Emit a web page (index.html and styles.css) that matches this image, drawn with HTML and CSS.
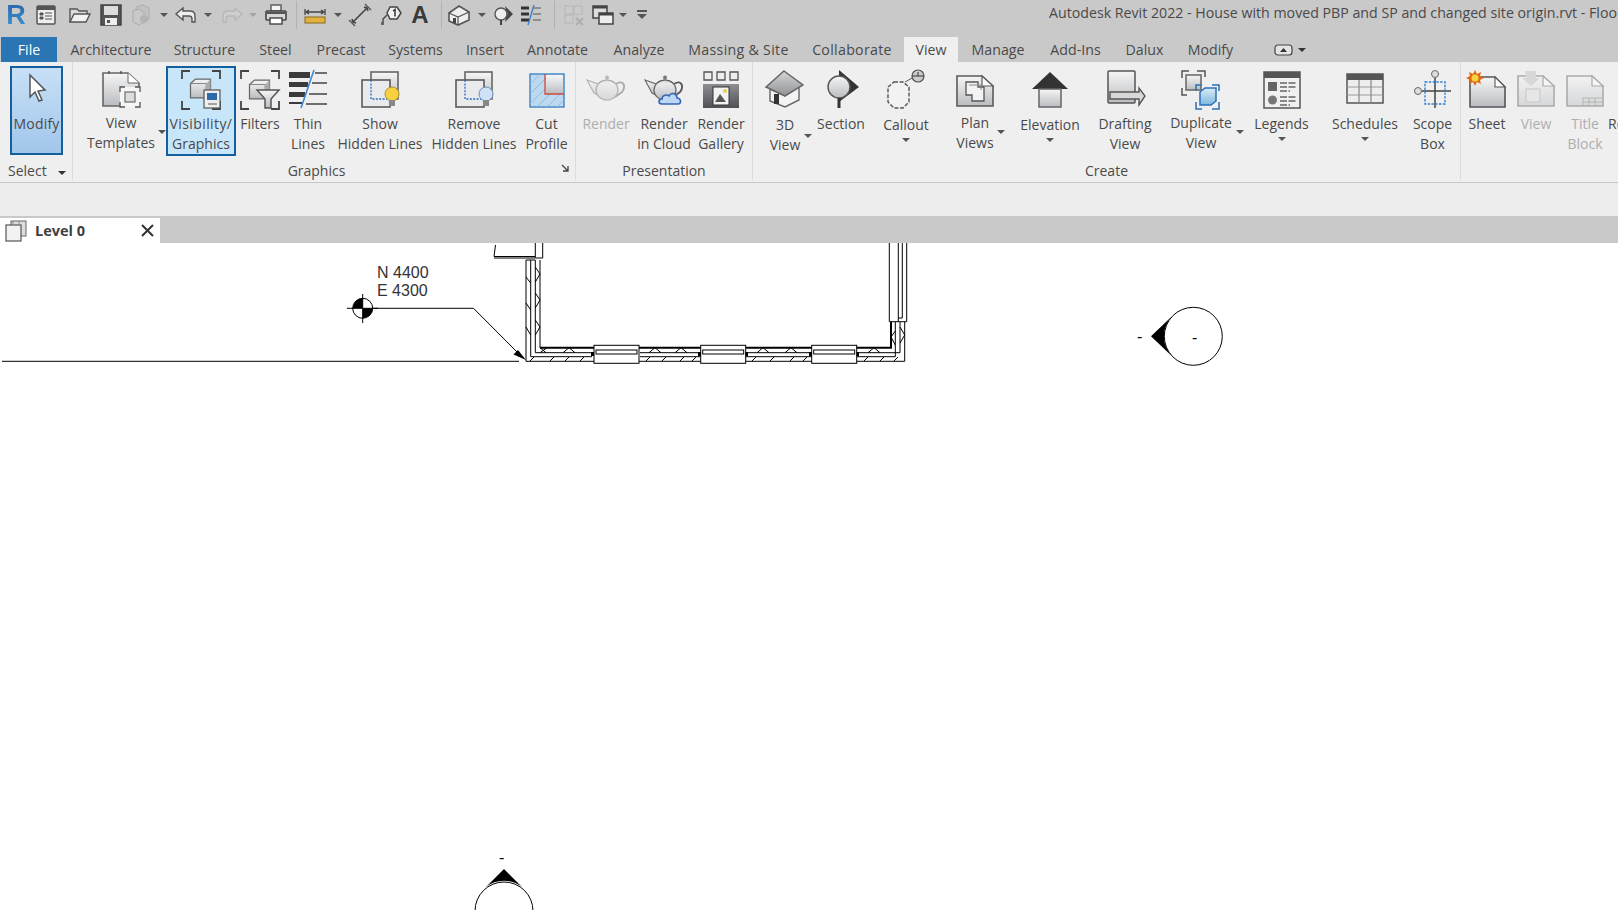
FILE: index.html
```html
<!DOCTYPE html>
<html lang="en">
<head>
    <meta charset="UTF-8">
    <title>Autodesk Revit 2022</title>
    <link rel="stylesheet" href="styles.css">
</head>
<body>
    <!-- shared gradients and shapes for the icons -->
    <svg class="defs">
        <defs>
            <linearGradient id="g" x1="0" y1="0" x2="0" y2="1"><stop offset="0" stop-color="#f6f6f6"/><stop offset="1" stop-color="#b9bcc0"/></linearGradient>
            <linearGradient id="gd" x1="0" y1="0" x2="0" y2="1"><stop offset="0" stop-color="#8d8f93"/><stop offset="1" stop-color="#4f5155"/></linearGradient>
            <linearGradient id="gr" x1="0" y1="0" x2="0" y2="1"><stop offset="0" stop-color="#d6d6d6"/><stop offset="1" stop-color="#8f9195"/></linearGradient>
            <linearGradient id="gb" x1="0" y1="0" x2="0" y2="1"><stop offset="0" stop-color="#d8ecf8"/><stop offset="1" stop-color="#7db8dc"/></linearGradient>
            <symbol id="sheet" viewBox="0 0 40 40"><path d="M2 6H27L38 16V36H2Z" fill="url(#g)" stroke="#5a5a5a" stroke-width="1.6"/><path d="M27 6V16H38Z" fill="#fff" stroke="#5a5a5a" stroke-width="1.2"/></symbol>
            <symbol id="corners" viewBox="0 0 40 40"><path d="M1 9V1H9M31 1H39V9M1 31V39H9M31 39H39V31" fill="none" stroke="#444" stroke-width="1.8"/></symbol>
            <symbol id="cube" viewBox="0 0 40 40"><path d="M4 12L12 5H36V28L29 35H4Z" fill="url(#g)" stroke="#666" stroke-width="2"/><path d="M4 12H29V35" fill="none" stroke="#888" stroke-width="1.6"/><path d="M29 12L36 5V28L29 35Z" fill="#a9abae"/></symbol>
            <symbol id="hidden" viewBox="0 0 40 40"><rect x="11" y="2" width="27" height="27" fill="url(#g)" stroke="#666" stroke-width="1.6"/><rect x="2" y="10" width="28" height="27" fill="#e9eaec" stroke="#5a5a5a" stroke-width="1.6"/><path d="M11 10V29H27" fill="none" stroke="#2b6cc4" stroke-width="1.3" stroke-dasharray="2 1.4"/></symbol>
            <symbol id="teapot" viewBox="0 0 40 40"><path d="M30 14C38 9 40 17 36 22L29 27" fill="none" stroke="#555" stroke-width="1.8"/><path d="M1 10L12 14V25L8 23Z" fill="url(#g)" stroke="#666" stroke-width="1.1"/><ellipse cx="21" cy="20" rx="11" ry="10" fill="url(#g)" stroke="#666" stroke-width="1.2"/><path d="M13 13Q21 7 29 13" fill="#ddd" stroke="#555" stroke-width="1.2"/><circle cx="21" cy="7.5" r="2" fill="#777"/></symbol>
        </defs>
    </svg>

    <div class="topbar">
        <div class="qat">
            <div class="qat-item"><span class="logo">R</span></div>
            <div class="qat-item"><svg width="24" height="24" viewBox="0 0 24 24"><rect x="3" y="3" width="18" height="18" rx="1" fill="#eee" stroke="#555" stroke-width="1.5"/><rect x="3" y="3" width="18" height="4" fill="#555"/><path d="M6 10h3v2H6zM6 14h3v2H6zM11 10h7M11 13h7M11 16h7" fill="#555" stroke="#555"/></svg></div>
            <div class="qat-item"><svg width="24" height="24" viewBox="0 0 24 24"><path d="M2 19V6H9L11 8H19V11" fill="#ddd" stroke="#555" stroke-width="1.4"/><path d="M2 19L6 11H22L18 19Z" fill="#f2f2f2" stroke="#555" stroke-width="1.4"/></svg></div>
            <div class="qat-item"><svg width="24" height="24" viewBox="0 0 24 24"><path d="M2 2H22V22H2Z" fill="#555" stroke="#444" stroke-width="1.5"/><rect x="5" y="3" width="14" height="9" fill="#ddd"/><rect x="6" y="15" width="12" height="7" fill="#eee"/><rect x="8" y="17" width="3" height="3" fill="#555"/></svg></div>
            <div class="qat-item"><svg class="off" width="24" height="24" viewBox="0 0 24 24"><path d="M7 4L14 2L20 5V16L14 20L7 17Z" fill="#bbb" stroke="#8a8a8a"/><path d="M4 8L10 6L15 9V19L10 22L4 19Z" fill="#c8c8c8" stroke="#8a8a8a"/><circle cx="15" cy="16" r="4" fill="#999"/></svg></div>
            <div class="qat-item"><i class="caret"></i></div>
            <div class="qat-item"><svg width="24" height="24" viewBox="0 0 24 24"><path d="M9 5L2 11L9 17V13H15C17 13 18 14 18 16V19H21V13C21 9 19 8 16 8H9Z" fill="#eee" stroke="#555" stroke-width="1.4"/></svg></div>
            <div class="qat-item"><i class="caret"></i></div>
            <div class="qat-item"><svg class="off" width="24" height="24" viewBox="0 0 24 24"><path d="M15 5L22 11L15 17V13H9C7 13 6 14 6 16V19H3V13C3 9 5 8 8 8H15Z" fill="#d5d5d5" stroke="#a2a2a2" stroke-width="1.4"/></svg></div>
            <div class="qat-item"><i class="caret caret-off"></i></div>
            <div class="qat-item"><svg width="24" height="24" viewBox="0 0 24 24"><rect x="7" y="2" width="10" height="6" fill="#f4f4f4" stroke="#555" stroke-width="1.4"/><rect x="2" y="8" width="20" height="9" rx="1" fill="#d8d8d8" stroke="#444" stroke-width="1.6"/><rect x="6" y="15" width="12" height="6" fill="#fff" stroke="#444" stroke-width="1.4"/><rect x="2.5" y="9" width="19" height="2" fill="#555"/></svg></div>
            <div class="qat-sep"></div>
            <div class="qat-item"><svg width="24" height="24" viewBox="0 0 24 24"><path d="M2 6V12M22 6V12M3 9H21M3 9L6 7M3 9L6 11M21 9L18 7M21 9L18 11" stroke="#444" stroke-width="1.3" fill="none"/><rect x="2" y="14" width="20" height="6" fill="#e3b23c" stroke="#8a6a1c"/></svg></div>
            <div class="qat-item"><i class="caret"></i></div>
            <div class="qat-item"><svg width="24" height="24" viewBox="0 0 24 24"><path d="M5 19L19 5M8 20L5 19L4 16M16 4L19 5L20 8" stroke="#444" stroke-width="1.6" fill="none"/><path d="M1 17L7 23M17 1L23 7" stroke="#555" stroke-width="1.4"/></svg></div>
            <div class="qat-item"><svg width="24" height="24" viewBox="0 0 24 24"><path d="M11 4H18L22 10L18 16H11L8 10Z" fill="#f2f2f2" stroke="#444" stroke-width="1.5"/><path d="M8 12L4 16V20" stroke="#444" stroke-width="1.4" fill="none"/><rect x="2" y="19" width="3" height="3" fill="#666"/><path d="M14 8L16 6.5V13.5" stroke="#333" stroke-width="1.5" fill="none"/></svg></div>
            <div class="qat-item"><span class="qat-a">A</span></div>
            <div class="qat-sep"></div>
            <div class="qat-item"><svg width="24" height="24" viewBox="0 0 24 24"><path d="M2 10L12 3L22 9V17L11 22L2 18Z" fill="#eee" stroke="#555" stroke-width="1.6"/><path d="M2 10L11 14L22 9M11 14V22" stroke="#555" stroke-width="1.2" fill="none"/><rect x="6" y="15" width="3" height="5" fill="#444"/></svg></div>
            <div class="qat-item"><i class="caret"></i></div>
            <div class="qat-item"><svg width="24" height="24" viewBox="0 0 24 24"><circle cx="10" cy="11" r="6" fill="#eee" stroke="#555" stroke-width="1.4"/><path d="M14 3L22 11L14 19L15 15A6 6 0 0 0 15 7Z" fill="#444"/><path d="M10 17V22" stroke="#444" stroke-width="2"/></svg></div>
            <div class="qat-item"><svg width="24" height="24" viewBox="0 0 24 24"><path d="M2 5H10M2 11H10M2 17H10" stroke="#333" stroke-width="3"/><path d="M14 5H22M14 11H22M14 17H22" stroke="#555" stroke-width="1.2"/><path d="M9 22L15 2" stroke="#3b82c9" stroke-width="1.4"/></svg></div>
            <div class="qat-sep"></div>
            <div class="qat-item"><svg class="off" width="24" height="24" viewBox="0 0 24 24"><rect x="3" y="3" width="8" height="8" fill="#ccc" stroke="#a0a0a0"/><rect x="12" y="3" width="8" height="8" fill="#ccc" stroke="#a0a0a0"/><rect x="3" y="12" width="8" height="8" fill="#ccc" stroke="#a0a0a0"/><path d="M14 15L21 22M21 15L14 22" stroke="#8f8f8f" stroke-width="2"/></svg></div>
            <div class="qat-item"><svg width="24" height="24" viewBox="0 0 24 24"><rect x="2" y="3" width="14" height="12" fill="#ddd" stroke="#444" stroke-width="1.5"/><rect x="8" y="10" width="14" height="11" fill="#eee" stroke="#444" stroke-width="1.5"/><rect x="2" y="3" width="14" height="2.5" fill="#444"/><rect x="8" y="10" width="14" height="2.5" fill="#444"/></svg></div>
            <div class="qat-item"><i class="caret"></i></div>
            <div class="qat-item"><svg width="14" height="12" viewBox="0 0 14 12"><path d="M2 2H12" stroke="#555" stroke-width="2"/><path d="M2 5H12L7 10Z" fill="#555"/></svg></div>
        </div>
        <div class="title">Autodesk Revit 2022 - House with moved PBP and SP and changed site origin.rvt - Floor Plan: Level 0</div>
    </div>

    <div class="tabs">
        <div class="tab tab-file">File</div>
        <div class="tab">Architecture</div>
        <div class="tab">Structure</div>
        <div class="tab">Steel</div>
        <div class="tab">Precast</div>
        <div class="tab">Systems</div>
        <div class="tab">Insert</div>
        <div class="tab">Annotate</div>
        <div class="tab">Analyze</div>
        <div class="tab tab-wide">Massing &amp; Site</div>
        <div class="tab tab-wide">Collaborate</div>
        <div class="tab tab-active">View</div>
        <div class="tab">Manage</div>
        <div class="tab">Add-Ins</div>
        <div class="tab">Dalux</div>
        <div class="tab">Modify</div>
        <div class="tab-toggle">
            <svg width="20" height="12" viewBox="0 0 20 12"><rect x="1" y="1" width="17" height="10" rx="3" fill="#e4e4e4" stroke="#444" stroke-width="1.2"/><path d="M6 8L9.5 4L13 8Z" fill="#333"/></svg>
            <i class="caret caret-dark"></i>
        </div>
    </div>

    <div class="ribbon">
        <section class="panel panel-select">
            <div class="tools">
                <div class="tool tool-on-modify">
                    <svg class="icon" width="40" height="40" viewBox="0 0 40 40"><path d="M13 5V27L18 22L22 31L25 30L21 21L28 20Z" fill="#fff" stroke="#555" stroke-width="1.5"/></svg>
                    <div class="lbl lbl-modify">Modify</div>
                </div>
            </div>
            <div class="panel-title title-select">Select <i class="caret caret-dark"></i></div>
        </section>

        <section class="panel panel-graphics">
            <div class="tools">
                <div class="tool">
                    <svg class="icon" width="40" height="40" viewBox="0 0 40 40"><path d="M2 3H27L38 13V36H2Z" fill="url(#g)" stroke="#666" stroke-width="1.6"/><path d="M27 3V13H38" fill="#fff" stroke="#666"/><path d="M8 1V4M20 1V4" stroke="#555" stroke-width="1.5"/><rect x="19" y="17" width="20" height="20" fill="#f5f5f5"/><path d="M19 22V17H24M34 17H39V22M19 32V37H24M34 37H39V32" fill="none" stroke="#555" stroke-width="1.3"/><rect x="24" y="22" width="10" height="10" fill="#ddd" stroke="#777" stroke-width="1.3"/></svg>
                    <div class="lbl lbl-up">View<br>Templates</div>
                    <i class="caret caret-side caret-templates"></i>
                </div>
                <div class="tool tool-on">
                    <svg class="icon" width="40" height="40" viewBox="0 0 40 40"><use href="#corners"/><use href="#cube" x="7" y="6" width="25" height="25"/><rect x="23" y="20" width="16" height="18" fill="#eee" stroke="#555" stroke-width="1.2"/><rect x="26" y="23" width="10" height="7" fill="#2e6aa8"/><path d="M27 34H36" stroke="#555"/></svg>
                    <div class="lbl"><span class="lbl-wide">Visibility/</span><br>Graphics</div>
                </div>
                <div class="tool">
                    <svg class="icon" width="40" height="40" viewBox="0 0 40 40"><use href="#corners"/><use href="#cube" x="7" y="7" width="25" height="25"/><path d="M17 20H39L31 29V38H25V29Z" fill="url(#g)" stroke="#555" stroke-width="1.5"/></svg>
                    <div class="lbl">Filters</div>
                </div>
                <div class="tool">
                    <svg class="icon" width="40" height="40" viewBox="0 0 40 40"><path d="M1 2H22V8H1ZM1 12H20V17H1ZM1 22H17V27H1ZM1 32H14V34H1Z" fill="#3a3a3a"/><path d="M27 3H39M24 13H39M21 24H39M18 34H39" stroke="#444" stroke-width="1.3"/><path d="M13 38L26 0" stroke="#3f88d2" stroke-width="1.6"/></svg>
                    <div class="lbl">Thin<br>Lines</div>
                </div>
                <div class="tool">
                    <svg class="icon" width="40" height="40" viewBox="0 0 40 40"><use href="#hidden"/><circle cx="32" cy="24" r="7" fill="#f7d23e" stroke="#a9902f"/><rect x="29" y="30" width="6" height="6" fill="#888"/></svg>
                    <div class="lbl">Show<br>Hidden Lines</div>
                </div>
                <div class="tool">
                    <svg class="icon" width="40" height="40" viewBox="0 0 40 40"><use href="#hidden"/><circle cx="32" cy="24" r="7" fill="#cfe2f7" stroke="#6d8fb4"/><rect x="29" y="30" width="6" height="6" fill="#888"/></svg>
                    <div class="lbl">Remove<br>Hidden Lines</div>
                </div>
                <div class="tool">
                    <svg class="icon" width="40" height="40" viewBox="0 0 40 40"><rect x="3" y="4" width="34" height="33" fill="#bcd8ef" stroke="#4a8bc6" stroke-width="1.5"/><path d="M3 14L13 4M3 24L23 4M3 34L33 4M10 37L37 10M20 37L37 20M30 37L37 30" stroke="#86b6de" stroke-width="0.8"/><path d="M19 5H36V24H19Z" fill="url(#g)"/><path d="M18 4V24H37" fill="none" stroke="#d0493c" stroke-width="1.3"/></svg>
                    <div class="lbl">Cut<br>Profile</div>
                </div>
            </div>
            <div class="panel-title title-graphics">Graphics</div>
            <svg class="expander" width="9" height="9" viewBox="0 0 9 9"><path d="M1 1L7 7M7 2V7H2" fill="none" stroke="#444" stroke-width="1.3"/></svg>
        </section>

        <section class="panel panel-presentation">
            <div class="tools">
                <div class="tool tool-off">
                    <svg class="icon off" width="40" height="40" viewBox="0 0 40 40"><use href="#teapot"/></svg>
                    <div class="lbl">Render</div>
                </div>
                <div class="tool">
                    <svg class="icon" width="40" height="40" viewBox="0 0 40 40"><use href="#teapot"/><path d="M18 34C14 34 14 29 18 29C18 25 23 24 25 26C27 22 33 23 33 28C37 28 38 34 34 34Z" fill="#bcd7f3" stroke="#3765b8" stroke-width="1.6"/></svg>
                    <div class="lbl">Render<br>in Cloud</div>
                </div>
                <div class="tool">
                    <svg class="icon" width="40" height="40" viewBox="0 0 40 40"><path d="M3 2H11V10H3ZM16 2H24V10H16ZM29 2H37V10H29Z" fill="#eee" stroke="#555" stroke-width="1.3"/><rect x="2" y="14" width="36" height="24" fill="url(#gd)"/><rect x="12" y="17" width="16" height="18" fill="#f3f3f3" stroke="#333"/><path d="M14 32L19 24L25 32Z" fill="#555"/><circle cx="24" cy="21" r="2" fill="#e9d14b"/></svg>
                    <div class="lbl">Render<br>Gallery</div>
                </div>
            </div>
            <div class="panel-title title-presentation">Presentation</div>
        </section>

        <section class="panel panel-create">
            <div class="tools">
                <div class="tool">
                    <svg class="icon" width="40" height="40" viewBox="0 0 40 40"><path d="M5 19V31L20 37L34 30V17L20 26Z" fill="#f3f3f3" stroke="#666" stroke-width="1.4"/><path d="M19 1L38 15L20 26L1 17Z" fill="url(#gr)" stroke="#666" stroke-width="1.5"/><rect x="9" y="24" width="5" height="10" fill="#333"/></svg>
                    <div class="lbl lbl-down">3D<br>View</div>
                    <i class="caret caret-side caret-3d"></i>
                </div>
                <div class="tool">
                    <svg class="icon" width="40" height="40" viewBox="0 0 40 40"><path d="M18 0L38 17L18 32Z" fill="#333"/><circle cx="18" cy="17" r="11" fill="url(#g)" stroke="#555" stroke-width="1.4"/><path d="M18 28V38" stroke="#333" stroke-width="3"/></svg>
                    <div class="lbl">Section</div>
                </div>
                <div class="tool">
                    <svg class="icon" width="40" height="40" viewBox="0 0 40 40"><path d="M8 12H17L23 17V32L17 38H8L2 32V17Z" fill="#f2f2f2" stroke="#555" stroke-width="1.4" stroke-dasharray="4 1.6"/><path d="M19 12L28 7" stroke="#555"/><circle cx="32" cy="6" r="6" fill="#ccc" stroke="#555" stroke-width="1.2"/><path d="M26 6H38M32 2V6" stroke="#333"/></svg>
                    <div class="lbl lbl-down">Callout</div>
                    <i class="caret caret-under"></i>
                </div>
                <div class="tool">
                    <svg class="icon" width="40" height="40" viewBox="0 0 40 40"><use href="#sheet"/><path d="M11 12H23V17H29V31H17V25H11Z" fill="#f3f3f3" stroke="#555" stroke-width="1.3"/><path d="M14 15H26V20" fill="none" stroke="#888"/></svg>
                    <div class="lbl lbl-up">Plan<br>Views</div>
                    <i class="caret caret-side caret-plan"></i>
                </div>
                <div class="tool">
                    <svg class="icon" width="40" height="40" viewBox="0 0 40 40"><path d="M20 2L38 19H2Z" fill="#333"/><rect x="9" y="19" width="22" height="18" fill="url(#g)" stroke="#666" stroke-width="1.5"/></svg>
                    <div class="lbl lbl-down">Elevation</div>
                    <i class="caret caret-under"></i>
                </div>
                <div class="tool">
                    <svg class="icon" width="40" height="40" viewBox="0 0 40 40"><rect x="3" y="1" width="27" height="32" rx="1" fill="url(#g)" stroke="#555" stroke-width="1.5"/><path d="M5 22H34V18L40 26L34 35V29H5Z" fill="#d8d8d8" stroke="#555" stroke-width="1.4"/></svg>
                    <div class="lbl">Drafting<br>View</div>
                </div>
                <div class="tool">
                    <svg class="icon" width="40" height="40" viewBox="0 0 40 40"><path d="M1 8V1H8M16 1H24V7M1 18V25H6" fill="none" stroke="#555" stroke-width="1.5"/><rect x="5" y="5" width="15" height="15" fill="url(#g)" stroke="#666" stroke-width="1.5"/><path d="M15 21V15H21M31 15H38V21M15 32V39H21M31 39H38V32" fill="none" stroke="#2c70b8" stroke-width="1.5"/><path d="M19 22L24 18H35V31L30 35H19Z" fill="url(#gb)" stroke="#2c70b8" stroke-width="1.5"/></svg>
                    <div class="lbl lbl-up">Duplicate<br>View</div>
                    <i class="caret caret-side caret-dup"></i>
                </div>
                <div class="tool">
                    <svg class="icon" width="40" height="40" viewBox="0 0 40 40"><rect x="2" y="2" width="36" height="36" fill="#f0f0f0" stroke="#555" stroke-width="1.5"/><rect x="2" y="2" width="36" height="6" fill="#555"/><rect x="6" y="12" width="9" height="9" fill="#666"/><circle cx="10.5" cy="30" r="4.5" fill="#777"/><path d="M18 13H34M18 17H34M18 21H28M18 27H34M18 31H34M18 35H28" stroke="#666" stroke-width="1.3" stroke-dasharray="7 1.5"/></svg>
                    <div class="lbl">Legends</div>
                    <i class="caret caret-under caret-under-up"></i>
                </div>
                <div class="tool">
                    <svg class="icon" width="40" height="40" viewBox="0 0 40 40"><rect x="2" y="4" width="36" height="29" fill="#eee" stroke="#555" stroke-width="1.5"/><rect x="2" y="4" width="36" height="6" fill="#555"/><path d="M2 17H38M2 25H38" stroke="#999" stroke-width="1.2"/><path d="M14 10V33M26 10V33" stroke="#888" stroke-width="1.2"/></svg>
                    <div class="lbl">Schedules</div>
                    <i class="caret caret-under caret-under-up"></i>
                </div>
                <div class="tool">
                    <svg class="icon" width="40" height="40" viewBox="0 0 40 40"><circle cx="22" cy="4" r="3.5" fill="#ddd" stroke="#666"/><circle cx="5" cy="21" r="3.5" fill="#ddd" stroke="#666"/><path d="M22 8V38M9 21H38" stroke="#444" stroke-width="1.5"/><rect x="12" y="12" width="20" height="22" fill="none" stroke="#2f7fd0" stroke-width="1.4" stroke-dasharray="2.4 1.4"/></svg>
                    <div class="lbl">Scope<br>Box</div>
                </div>
            </div>
            <div class="panel-title title-create">Create</div>
        </section>

        <section class="panel panel-sheet">
            <div class="tools">
                <div class="tool">
                    <svg class="icon" width="40" height="40" viewBox="0 0 40 40"><path d="M3 7H28L38 17V37H3Z" fill="url(#g)" stroke="#555" stroke-width="1.6"/><path d="M28 7V17H38Z" fill="#fff" stroke="#555" stroke-width="1.1"/><path d="M8 0L10 4L14 2L13 6L17 8L13 10L14 14L10 12L8 16L6 12L2 14L3 10L-1 8L3 6L2 2L6 4Z" fill="#e06a12"/><circle cx="8" cy="8" r="3.5" fill="#f6d345"/></svg>
                    <div class="lbl">Sheet</div>
                </div>
                <div class="tool tool-off">
                    <svg class="icon off" width="40" height="40" viewBox="0 0 40 40"><use href="#sheet"/><path d="M9 1H20V8H24L15 16L6 8H10Z" fill="#bbb"/><rect x="10" y="19" width="14" height="13" fill="#ddd" stroke="#999"/></svg>
                    <div class="lbl">View</div>
                </div>
                <div class="tool tool-off">
                    <svg class="icon off" width="40" height="40" viewBox="0 0 40 40"><use href="#sheet"/><path d="M18 36V28H38M24 28V36M30 28V36M18 32H38" fill="none" stroke="#777" stroke-width="1.2"/></svg>
                    <div class="lbl">Title<br>Block</div>
                </div>
                <div class="tool tool-clipped">
                    <div class="icon-space"></div>
                    <div class="lbl">Revision</div>
                </div>
            </div>
        </section>
    </div>

    <div class="options-bar"></div>

    <div class="doc-tabs">
        <div class="doc-tab">
            <svg width="22" height="22" viewBox="0 0 22 22"><rect x="6" y="1" width="15" height="15" fill="#ddd" stroke="#666"/><rect x="1" y="5" width="15" height="16" fill="#f2f2f2" stroke="#555" stroke-width="1.2"/><path d="M8 1V5M14 1V5" stroke="#888"/></svg>
            <span class="doc-name">Level 0</span>
            <svg class="doc-close" width="15" height="15" viewBox="0 0 15 15"><path d="M2 2L13 13M13 2L2 13" stroke="#333" stroke-width="2"/></svg>
        </div>
    </div>

    <svg class="canvas" width="1618" height="667" viewBox="0 243 1618 667">
        <g class="thin">
            <!-- survey point and its leader -->
            <circle cx="362.7" cy="308.3" r="10"/>
            <path class="solid" d="M362.7 308.3V298.3A10 10 0 0 0 352.7 308.3ZM362.7 308.3V318.3A10 10 0 0 0 372.7 308.3Z"/>
            <path d="M347 308.3H378M362.7 294V323M372 308.3H473.5L523 358"/>
            <path class="solid" d="M526 360L518 350L513.5 354.5Z"/>
            <path d="M2 361.3H519"/>

            <!-- bit of wall and door at the top -->
            <path d="M535.3 243V258H542.7V243M495.5 245L494 256.5H535M494 258H535"/>

            <!-- left wall -->
            <path d="M535.3 260H526V361.3H904.7V322M530.7 260V356.7H592M535.3 260V352.7H592M540 260V347.7"/>
            <path d="M526 277L530.7 283M526 303L530.7 310M526 327L530.7 335M535.3 267L540 274L535.3 282M535.3 293L540 300L535.3 308M535.3 320L540 327L535.3 335"/>

            <!-- right wall with window strip -->
            <path d="M889.3 243V321.7H906.7V243M898.3 243V321.7M902.3 243V318H898.3M895.3 322V356.7H640M900 322V352.7H640"/>
            <path d="M900 327L904.7 335L900 343M891 337L895.3 331M891 337L895.3 345"/>

            <!-- wall hatch -->
            <path d="M540 352.7L547 347.7M540 347.7L546 352.7M563 352.7L569 347.7L575 352.7M649 352.7L655 347.7L661 352.7M675 352.7L681 347.7L687 352.7M757 352.7L763 347.7L769 352.7M785 352.7L791 347.7L797 352.7M868 352.7L874 347.7L880 352.7"/>
            <path d="M530 361L534 357M550 361L554 357M565 361L569 357M580 361L584 357M646 361L650 357M662 361L666 357M680 361L684 357M692 361L696 357M752 361L756 357M770 361L774 357M790 361L794 357M803 361L807 357M864 361L868 357M880 361L884 357M894 361L898 357"/>
        </g>
        <path class="thick" d="M540 347.7H891V322"/>

        <!-- windows in the bottom wall -->
        <g class="thin window">
            <rect x="594" y="345.3" width="45" height="18"/>
            <rect x="596" y="350" width="41" height="4"/>
            <rect x="700.7" y="345.3" width="45" height="18"/>
            <rect x="702.7" y="350" width="41" height="4"/>
            <rect x="811.7" y="345.3" width="45" height="18"/>
            <rect x="813.7" y="350" width="41" height="4"/>
        </g>
        <path class="solid" d="M591 352H594V356H591ZM698 352H701V356H698ZM745.7 352H748V356H745.7ZM809 352H812V356H809ZM856.7 352H859V356H856.7Z"/>

        <text class="spot" x="377" y="278">N 4400</text>
        <text class="spot" x="377" y="296">E 4300</text>

        <!-- section mark on the right -->
        <circle class="thin" cx="1193.3" cy="336.3" r="29"/>
        <path class="solid" d="M1151 336.3L1171.7 316.5A29 29 0 0 0 1171.7 356Z"/>
        <text class="dash" x="1137" y="342">-</text>
        <text class="dash" x="1192" y="343">-</text>

        <!-- elevation mark at the bottom -->
        <circle class="thin" cx="504" cy="911" r="29"/>
        <path class="solid" d="M504 869L486 887A29 29 0 0 1 522 887Z"/>
        <text class="dash" x="499" y="863">-</text>
    </svg>
</body>
</html>
```

FILE: styles.css
```css
html, body {
    margin: 0;
    padding: 0;
    height: 910px;
    overflow: hidden;
    background-color: #fff;
    font-family: 'Open Sans', sans-serif;
    color: #4a4a4a;
}

.defs {
    display: block;
    width: 0;
    height: 0;
}

.caret {
    display: inline-block;
    width: 0;
    height: 0;
    border-left: 4px solid transparent;
    border-right: 4px solid transparent;
    border-top: 4px solid #555;
}

.caret-off {
    border-top-color: #a5a5a5;
}

.caret-dark {
    border-top-color: #333;
}

.off {
    opacity: 0.45;
}

/* title bar */
.topbar {
    display: flex;
    height: 37px;
    background-color: #c9c9c9;
}

.qat {
    flex: none;
    display: grid;
    grid-template-columns: 24px 36px 32px 30px 30px 16px 28px 16px 32px 10px 36px 4px 34px 12px 32px 30px 28px 14px 22px 24px 18px 38px 8px 31px 28px 12px 26px;
    grid-template-rows: 24px;
    height: 24px;
    margin: 3px 0 0 4px;
    align-items: center;
    justify-items: center;
}

.qat-item {
    display: flex;
    align-items: center;
    justify-content: center;
    height: 24px;
}

.qat-sep {
    width: 1px;
    height: 28px;
    background-color: #b2b2b2;
}

.logo {
    font-family: 'Liberation Sans', sans-serif;
    font-weight: bold;
    font-size: 27px;
    background: linear-gradient(#2a5da6, #3c9ed8);
    -webkit-background-clip: text;
    background-clip: text;
    color: transparent;
}

.qat-a {
    font-family: 'Liberation Sans', sans-serif;
    font-weight: bold;
    font-size: 24px;
    color: #3a3a3a;
}

.title {
    flex: 1;
    min-width: 0;
    margin-left: 394px;
    padding-top: 3px;
    font-size: 14.2px;
    line-height: 20px;
    white-space: nowrap;
    overflow: hidden;
}

/* ribbon tabs */
.tabs {
    display: grid;
    grid-template-columns: 56px 108px 79px 63px 68px 81px 58px 87px 76px 123px 104px 54px 80px 75px 63px 69px auto;
    height: 25px;
    padding-left: 1px;
    background-color: #c9c9c9;
}

.tab {
    font-size: 14.2px;
    line-height: 25px;
    text-align: center;
    white-space: nowrap;
}

.tab-wide {
    letter-spacing: 0.3px;
}

.tab-file {
    background-color: #2a76b5;
    color: #fff;
}

.tab-active {
    background-color: #efefef;
}

.tab-toggle {
    display: flex;
    align-items: center;
    gap: 4px;
    margin-left: 29px;
}

/* ribbon */
.ribbon {
    display: flex;
    height: 120px;
    background-color: #efefef;
    border-bottom: 1px solid #c8c8c8;
    overflow: hidden;
}

.panel {
    position: relative;
    flex: none;
    box-sizing: border-box;
    height: 118px;
    padding-top: 4px;
    border-right: 1px solid #dcdcdc;
}

.panel-select {
    width: 73px;
    padding-left: 10px;
}

.panel-graphics {
    width: 503px;
    padding-left: 3px;
}

.panel-presentation {
    width: 177px;
    padding-left: 6px;
}

.panel-create {
    width: 708px;
    padding-left: 7px;
}

.panel-sheet {
    flex: 1;
    padding-left: 3px;
    border-right: none;
}

.tools {
    display: grid;
    height: 89px;
}

.panel-select .tools { grid-template-columns: 53px; }
.panel-graphics .tools { grid-template-columns: 90px 70px 48px 48px 96px 92px 53px; }
.panel-presentation .tools { grid-template-columns: 48px 68px 46px; }
.panel-create .tools { grid-template-columns: 50px 62px 68px 70px 80px 70px 82px 79px 88px 47px; }
.panel-sheet .tools { grid-template-columns: 46px 52px 46px 60px; }

.tool {
    position: relative;
    display: flex;
    flex-direction: column;
    align-items: center;
    box-sizing: border-box;
    padding-top: 4px;
}

.tool-on {
    background-color: #c8e6fa;
    border: 2px solid #14609f;
    padding-top: 2px;
}

.tool-on-modify {
    background: linear-gradient(#c7e0f6, #a2c6eb);
    border: 2px solid #14609f;
    padding-top: 2px;
}

.tool-off .lbl {
    color: #aeaeae;
}

.tool-clipped {
    align-items: flex-start;
}

.icon {
    flex: none;
    display: block;
    overflow: visible;
}

.icon-space {
    height: 40px;
}

.lbl {
    margin-top: 4px;
    font-size: 14px;
    line-height: 20px;
    text-align: center;
    white-space: nowrap;
}

.lbl-wide {
    letter-spacing: 0.4px;
}

.lbl-modify {
    letter-spacing: 0.2px;
}

.lbl-up {
    margin-top: 3px;
}

.lbl-down {
    margin-top: 5px;
}

.caret-side {
    position: absolute;
    right: -2px;
    top: 64px;
}

.caret-templates {
    right: 0;
}

.caret-3d {
    top: 68px;
}

.caret-plan {
    right: 5px;
}

.caret-dup {
    right: -2px;
}

.caret-under {
    margin-top: 3px;
}

.caret-under-up {
    margin-top: 3px;
}

.panel-title {
    margin-top: 6px;
    font-size: 14px;
    line-height: 20px;
    text-align: center;
    white-space: nowrap;
}

.title-select {
    margin-left: -2px;
    text-align: left;
}

.title-select .caret {
    margin-left: 8px;
    vertical-align: 1px;
}

.title-graphics {
    padding-right: 18px;
}

.title-presentation {
    margin-left: -6px;
}

.title-create {
    margin-left: -7px;
}

.expander {
    position: absolute;
    right: 5px;
    bottom: 7px;
}

/* options bar and view tabs */
.options-bar {
    height: 33px;
    background-color: #ededed;
}

.doc-tabs {
    height: 27px;
    background-color: #c9c9c9;
}

.doc-tab {
    display: flex;
    align-items: center;
    box-sizing: border-box;
    width: 160px;
    height: 27px;
    padding-left: 5px;
    background-color: #fff;
    border-top: 2px solid #c9c9c9;
}

.doc-name {
    margin-left: 8px;
    font-size: 14.5px;
    font-weight: 700;
    color: #3f3f3f;
}

.doc-close {
    margin-left: auto;
    margin-right: 5px;
}

/* drawing area */
.canvas {
    display: block;
    background-color: #fff;
}

.thin {
    fill: none;
    stroke: #000;
    stroke-width: 1;
}

.thin .solid,
.solid {
    fill: #000;
    stroke: none;
}

.thick {
    fill: none;
    stroke: #000;
    stroke-width: 2;
}

.window rect {
    fill: #fff;
}

.spot {
    font-family: 'Liberation Sans', sans-serif;
    font-size: 16px;
    fill: #333;
}

.dash {
    font-family: 'Liberation Sans', sans-serif;
    font-size: 16px;
    fill: #000;
}
```
